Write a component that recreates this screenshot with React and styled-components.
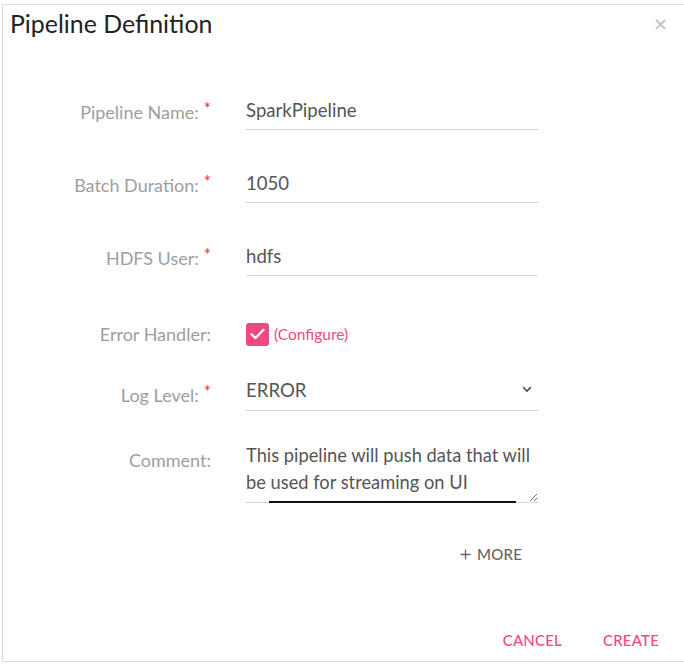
import React from 'react';
import styled, { createGlobalStyle } from 'styled-components';

const GlobalStyle = createGlobalStyle`
  html, body {
    margin: 0;
    padding: 0;
    background: #fff;
  }
  body {
    font-family: Lato, "Liberation Sans", sans-serif;
  }
`;

const PINK = '#ee4a7f';

const Dialog = styled.div`
  box-sizing: border-box;
  margin: 4px 0 0 2px;
  width: calc(100% - 2px);
  height: 658px;
  border: 1px solid #dcdcdc;
  border-right: none;
  background: #fff;
  display: flex;
  flex-direction: column;
`;

const Header = styled.div`
  display: flex;
  align-items: flex-start;
  justify-content: space-between;
  padding: 3px 16px 0 7px;
`;

const Title = styled.h4`
  margin: 0;
  font-size: 24.9px;
  font-weight: 400;
  color: #222;
  line-height: 30px;
`;

const CloseButton = styled.button`
  border: none;
  background: none;
  padding: 0;
  margin-top: 7px;
  color: #bdbdbd;
  font-size: 18px;
  line-height: 18px;
  cursor: pointer;
  font-family: "DejaVu Sans", sans-serif;
`;

const Body = styled.div`
  flex: 1;
  display: flex;
  flex-direction: column;
  padding-top: 56px;
`;

const Row = styled.div`
  display: grid;
  grid-template-columns: 208px 292px;
  column-gap: 35px;
  align-items: ${p => (p.$top ? 'start' : 'center')};
  margin-top: ${p => p.$gap || 0}px;
  min-height: 36px;
`;

const Label = styled.label`
  text-align: right;
  font-size: 18px;
  color: #9e9e9e;
  line-height: 36px;
  padding-top: ${p => p.$shift || 0}px;
  white-space: nowrap;
`;

const Required = styled.span`
  color: #f0302c;
  margin-left: 5px;
  font-size: 17px;
  vertical-align: top;
  line-height: 30px;
`;

const TextInput = styled.input`
  box-sizing: border-box;
  width: 100%;
  height: 36px;
  border: none;
  border-bottom: 1px solid #d6d6d6;
  outline: none;
  padding: 0 0 3px 0;
  font-family: inherit;
  font-size: 18.6px;
  color: #555;
  background: transparent;
`;

const CheckLine = styled.div`
  display: flex;
  align-items: center;
  gap: 5px;
  height: 36px;
`;

const CheckBox = styled.span`
  width: 23px;
  height: 23px;
  border-radius: 3px;
  background: ${PINK};
  display: inline-flex;
  align-items: center;
  justify-content: center;
`;

const ConfigureLink = styled.a`
  color: ${PINK};
  font-size: 15.5px;
  text-decoration: none;
  cursor: pointer;
`;

const SelectBox = styled.div`
  box-sizing: border-box;
  height: 36px;
  border-bottom: 1px solid #d6d6d6;
  display: flex;
  align-items: center;
  justify-content: space-between;
  padding: 0 6px 6px 0;
  font-size: 18.6px;
  color: #555;
`;

const AreaWrap = styled.div`
  position: relative;
  display: flex;
  &::after {
    content: '';
    position: absolute;
    left: 23px;
    right: 22px;
    bottom: 0;
    height: 2px;
    background: #111;
  }
`;

const TextArea = styled.textarea`
  box-sizing: border-box;
  width: 100%;
  height: 61px;
  border: none;
  border-bottom: 1px solid #d6d6d6;
  outline: none;
  padding: 0 0 6px 0;
  resize: vertical;
  font-family: inherit;
  font-size: 18.3px;
  line-height: 27px;
  color: #555;
  background: transparent;
  overflow: hidden;
`;

const MoreLine = styled.div`
  width: 535px;
  display: flex;
  justify-content: flex-end;
  margin-top: 33px;
`;

const FlatButton = styled.button`
  border: none;
  background: none;
  height: 36px;
  padding: 0 16px;
  font-family: inherit;
  font-size: 15px;
  font-weight: 500;
  letter-spacing: 0.2px;
  color: ${p => p.$color || '#666'};
  cursor: pointer;
  display: inline-flex;
  align-items: center;
  gap: 6px;
`;

const Footer = styled.div`
  display: flex;
  justify-content: flex-end;
  gap: 9px;
  padding: 0 9px 3px 0;
`;

const CheckIcon = () => (
  <svg width="15" height="12" viewBox="0 0 15 12">
    <path d="M1.5 6.2 L5.5 10 L13.5 1.8" fill="none" stroke="#fff" strokeWidth="2.2" strokeLinecap="round" strokeLinejoin="round" />
  </svg>
);

const Chevron = () => (
  <svg width="10" height="7" viewBox="0 0 10 7">
    <path d="M1.5 1.5 L5 5 L8.5 1.5" fill="none" stroke="#444" strokeWidth="1.6" strokeLinecap="round" />
  </svg>
);

const Plus = () => (
  <svg width="11" height="11" viewBox="0 0 11 11">
    <path d="M5.5 0.5 V10.5 M0.5 5.5 H10.5" stroke="#666" strokeWidth="1.3" />
  </svg>
);

export default function App() {
  return (
    <>
      <GlobalStyle />
      <Dialog>
        <Header>
          <Title>Pipeline Definition</Title>
          <CloseButton aria-label="close">×</CloseButton>
        </Header>
        <Body>
          <Row>
            <Label>Pipeline Name:<Required>*</Required></Label>
            <TextInput defaultValue="SparkPipeline" />
          </Row>
          <Row $gap={37}>
            <Label>Batch Duration:<Required>*</Required></Label>
            <TextInput defaultValue="1050" />
          </Row>
          <Row $gap={37}>
            <Label>HDFS User:<Required>*</Required></Label>
            <TextInput defaultValue="hdfs" />
          </Row>
          <Row $gap={40}>
            <Label>Error Handler:</Label>
            <CheckLine>
              <CheckBox><CheckIcon /></CheckBox>
              <ConfigureLink>(Configure)</ConfigureLink>
            </CheckLine>
          </Row>
          <Row $gap={21}>
            <Label $shift={4}>Log Level:<Required>*</Required></Label>
            <SelectBox>
              <span>ERROR</span>
              <Chevron />
            </SelectBox>
          </Row>
          <Row $gap={29} $top>
            <Label>Comment:</Label>
            <AreaWrap>
              <TextArea defaultValue="This pipeline will push data that will be used for streaming on UI" spellCheck={false} />
            </AreaWrap>
          </Row>
          <MoreLine>
            <FlatButton><Plus />MORE</FlatButton>
          </MoreLine>
          <div style={{ flex: 1 }} />
          <Footer>
            <FlatButton $color={PINK}>CANCEL</FlatButton>
            <FlatButton $color={PINK}>CREATE</FlatButton>
          </Footer>
        </Body>
      </Dialog>
    </>
  );
}
